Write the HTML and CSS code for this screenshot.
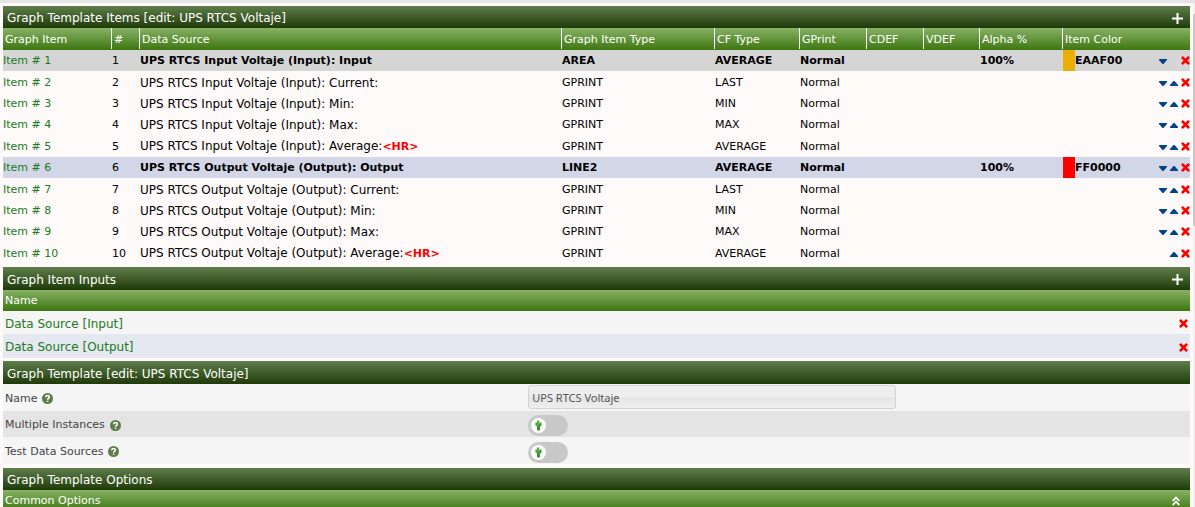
FILE: index.html
```html
<!DOCTYPE html>
<html lang="en">
<head>
<meta charset="utf-8">
<title>Graph Template</title>
<link rel="stylesheet" href="styles.css">
</head>
<body>
<svg class="defs" aria-hidden="true">
  <symbol id="plus" viewBox="0 0 11 11"><path d="M4.500 0h2v4.500H11v2H6.500V11h-2V6.500H0v-2h4.500z"/></symbol>
  <symbol id="cross" viewBox="0 0 9 9"><path d="M1.8 0 4.5 2.6 7.2 0 9 1.8 6.4 4.5 9 7.2 7.2 9 4.5 6.4 1.8 9 0 7.2 2.6 4.5 0 1.8z"/></symbol>
  <symbol id="down" viewBox="0 0 8 5"><path d="M0 0h8v1L4.5 5h-1L0 1z"/></symbol>
  <symbol id="up" viewBox="0 0 8 5"><path d="M0 5h8V4L4.5 0h-1L0 4z"/></symbol>
  <symbol id="help" viewBox="0 0 11 11"><circle cx="5.5" cy="5.5" r="5.5" fill="#5c7c48"/><path d="M3.7 4.2C3.8 2 7.4 2 7.3 4.2 7.3 5.3 5.6 5.3 5.6 6.7M5.6 7.7v1.4" fill="none" stroke="#fff" stroke-width="1.6"/></symbol>
  <symbol id="collapse" viewBox="0 0 8 10"><path d="M.7 4.8 4 1.5l3.3 3.3M.7 9 4 5.7 7.3 9" fill="none" stroke="#fff" stroke-width="1.8"/></symbol>
  <symbol id="cactus" viewBox="0 0 7 11"><path d="M2 1q1-1.500 2.300 0v2.500h.7V2.500h1.500v3L5 6.500V10q-1.500 1.500-3 0V6L.5 5.500v-3H2z" fill="#2f9a2b"/><path d="M2.500 1h1v5h-1zM.5 3h1v1.500h-1z" fill="#8cc152"/></symbol>
</svg>
<main class="page">
  <div class="content">
    <section class="panel">
      <header class="title"><h2>Graph Template Items [edit: UPS RTCS Voltaje]</h2><a href="#" aria-label="Add item"><svg class="plus"><use href="#plus"/></svg></a></header>
      <table class="items">
        <colgroup><col class="c-item"><col class="c-num"><col><col class="c-type"><col class="c-cf"><col class="c-gprint"><col class="c-cdef"><col class="c-vdef"><col class="c-alpha"><col class="c-color"></colgroup>
        <thead><tr><th><span>Graph Item</span></th><th><span>#</span></th><th><span>Data Source</span></th><th><span>Graph Item Type</span></th><th><span>CF Type</span></th><th><span>GPrint</span></th><th><span>CDEF</span></th><th><span>VDEF</span></th><th><span>Alpha %</span></th><th><span>Item Color</span></th></tr></thead>
        <tbody>
          <tr class="main gray"><td><a href="#">Item # 1</a></td><td>1</td><td>UPS RTCS Input Voltaje (Input): Input</td><td>AREA</td><td>AVERAGE</td><td>Normal</td><td></td><td></td><td>100%</td><td><div class="color-cell"><i class="swatch amber"></i><span>EAAF00</span><span class="actions"><a href="#" aria-label="Move down"><svg class="arrow"><use href="#down"/></svg></a><i class="blank"></i><a href="#" aria-label="Delete"><svg class="cross"><use href="#cross"/></svg></a></span></div></td></tr>
          <tr><td><a href="#">Item # 2</a></td><td>2</td><td>UPS RTCS Input Voltaje (Input): Current:</td><td>GPRINT</td><td>LAST</td><td>Normal</td><td></td><td></td><td></td><td><div class="color-cell"><span class="actions"><a href="#" aria-label="Move down"><svg class="arrow"><use href="#down"/></svg></a><a href="#" aria-label="Move up"><svg class="arrow"><use href="#up"/></svg></a><a href="#" aria-label="Delete"><svg class="cross"><use href="#cross"/></svg></a></span></div></td></tr>
          <tr><td><a href="#">Item # 3</a></td><td>3</td><td>UPS RTCS Input Voltaje (Input): Min:</td><td>GPRINT</td><td>MIN</td><td>Normal</td><td></td><td></td><td></td><td><div class="color-cell"><span class="actions"><a href="#" aria-label="Move down"><svg class="arrow"><use href="#down"/></svg></a><a href="#" aria-label="Move up"><svg class="arrow"><use href="#up"/></svg></a><a href="#" aria-label="Delete"><svg class="cross"><use href="#cross"/></svg></a></span></div></td></tr>
          <tr><td><a href="#">Item # 4</a></td><td>4</td><td>UPS RTCS Input Voltaje (Input): Max:</td><td>GPRINT</td><td>MAX</td><td>Normal</td><td></td><td></td><td></td><td><div class="color-cell"><span class="actions"><a href="#" aria-label="Move down"><svg class="arrow"><use href="#down"/></svg></a><a href="#" aria-label="Move up"><svg class="arrow"><use href="#up"/></svg></a><a href="#" aria-label="Delete"><svg class="cross"><use href="#cross"/></svg></a></span></div></td></tr>
          <tr><td><a href="#">Item # 5</a></td><td>5</td><td>UPS RTCS Input Voltaje (Input): Average:<b class="hr">&lt;HR&gt;</b></td><td>GPRINT</td><td>AVERAGE</td><td>Normal</td><td></td><td></td><td></td><td><div class="color-cell"><span class="actions"><a href="#" aria-label="Move down"><svg class="arrow"><use href="#down"/></svg></a><a href="#" aria-label="Move up"><svg class="arrow"><use href="#up"/></svg></a><a href="#" aria-label="Delete"><svg class="cross"><use href="#cross"/></svg></a></span></div></td></tr>
          <tr class="main blue"><td><a href="#">Item # 6</a></td><td>6</td><td>UPS RTCS Output Voltaje (Output): Output</td><td>LINE2</td><td>AVERAGE</td><td>Normal</td><td></td><td></td><td>100%</td><td><div class="color-cell"><i class="swatch red"></i><span>FF0000</span><span class="actions"><a href="#" aria-label="Move down"><svg class="arrow"><use href="#down"/></svg></a><a href="#" aria-label="Move up"><svg class="arrow"><use href="#up"/></svg></a><a href="#" aria-label="Delete"><svg class="cross"><use href="#cross"/></svg></a></span></div></td></tr>
          <tr><td><a href="#">Item # 7</a></td><td>7</td><td>UPS RTCS Output Voltaje (Output): Current:</td><td>GPRINT</td><td>LAST</td><td>Normal</td><td></td><td></td><td></td><td><div class="color-cell"><span class="actions"><a href="#" aria-label="Move down"><svg class="arrow"><use href="#down"/></svg></a><a href="#" aria-label="Move up"><svg class="arrow"><use href="#up"/></svg></a><a href="#" aria-label="Delete"><svg class="cross"><use href="#cross"/></svg></a></span></div></td></tr>
          <tr><td><a href="#">Item # 8</a></td><td>8</td><td>UPS RTCS Output Voltaje (Output): Min:</td><td>GPRINT</td><td>MIN</td><td>Normal</td><td></td><td></td><td></td><td><div class="color-cell"><span class="actions"><a href="#" aria-label="Move down"><svg class="arrow"><use href="#down"/></svg></a><a href="#" aria-label="Move up"><svg class="arrow"><use href="#up"/></svg></a><a href="#" aria-label="Delete"><svg class="cross"><use href="#cross"/></svg></a></span></div></td></tr>
          <tr><td><a href="#">Item # 9</a></td><td>9</td><td>UPS RTCS Output Voltaje (Output): Max:</td><td>GPRINT</td><td>MAX</td><td>Normal</td><td></td><td></td><td></td><td><div class="color-cell"><span class="actions"><a href="#" aria-label="Move down"><svg class="arrow"><use href="#down"/></svg></a><a href="#" aria-label="Move up"><svg class="arrow"><use href="#up"/></svg></a><a href="#" aria-label="Delete"><svg class="cross"><use href="#cross"/></svg></a></span></div></td></tr>
          <tr><td><a href="#">Item # 10</a></td><td>10</td><td>UPS RTCS Output Voltaje (Output): Average:<b class="hr">&lt;HR&gt;</b></td><td>GPRINT</td><td>AVERAGE</td><td>Normal</td><td></td><td></td><td></td><td><div class="color-cell"><span class="actions"><a href="#" aria-label="Move up"><svg class="arrow"><use href="#up"/></svg></a><a href="#" aria-label="Delete"><svg class="cross"><use href="#cross"/></svg></a></span></div></td></tr>
        </tbody>
      </table>
    </section>

    <section class="panel">
      <header class="title tall"><h2>Graph Item Inputs</h2><a href="#" aria-label="Add input"><svg class="plus"><use href="#plus"/></svg></a></header>
      <table class="inputs">
        <thead><tr><th><span>Name</span></th></tr></thead>
        <tbody>
          <tr><td><div class="input-row"><a href="#">Data Source [Input]</a><a href="#" aria-label="Delete"><svg class="cross"><use href="#cross"/></svg></a></div></td></tr>
          <tr class="alt"><td><div class="input-row"><a href="#">Data Source [Output]</a><a href="#" aria-label="Delete"><svg class="cross"><use href="#cross"/></svg></a></div></td></tr>
        </tbody>
      </table>
    </section>

    <form class="panel">
      <header class="title tall"><h2>Graph Template [edit: UPS RTCS Voltaje]</h2></header>
      <div class="field"><div class="label"><label for="name">Name</label><svg class="help"><use href="#help"/></svg></div><input class="text" id="name" type="text" value="UPS RTCS Voltaje"></div>
      <div class="field dark"><div class="label"><label for="multiple">Multiple Instances</label><svg class="help"><use href="#help"/></svg></div><span class="switch"><input id="multiple" type="checkbox"><svg class="knob"><use href="#cactus"/></svg></span></div>
      <div class="field"><div class="label"><label for="test">Test Data Sources</label><svg class="help"><use href="#help"/></svg></div><span class="switch"><input id="test" type="checkbox"><svg class="knob"><use href="#cactus"/></svg></span></div>
    </form>

    <section class="panel options">
      <header class="title"><h2>Graph Template Options</h2></header>
      <div class="subtitle"><h3>Common Options</h3><a href="#" aria-label="Collapse"><svg class="collapse"><use href="#collapse"/></svg></a></div>
    </section>
  </div>
  <div class="scroll"><div class="thumb"></div></div>
</main>
</body>
</html>
```
FILE: styles.css
```css
* { box-sizing: border-box; }
body {
  margin: 0;
  height: 100vh;
  overflow: hidden;
  background: #fffafa;
  color: #000;
  font: 11px/14px Verdana, "DejaVu Sans", sans-serif;
}
a { color: #227a22; text-decoration: none; }
svg { display: block; }
h2, h3 { margin: 0; font-size: 12px; font-weight: normal; }
h3 { font-size: 11px; }
.defs { display: none; }
.page { display: flex; height: 100%; border-top: 3px solid #e5e5e5; }
.content { flex: 1; min-width: 0; padding: 3px 3px 0; overflow: hidden; }
.panel { margin-bottom: 3px; }

.title {
  display: flex;
  align-items: center;
  justify-content: space-between;
  height: 22px;
  padding: 2px 7px 0 4px;
  background: linear-gradient(#5f7e4b, #1f3a08);
  color: #fff;
}
.title.tall { height: 23px; }
.plus { width: 11px; height: 11px; fill: #fff; }

table { width: 100%; border-collapse: collapse; table-layout: fixed; }
thead tr { height: 22px; background: linear-gradient(#88b266, #3d7610); }
th { padding: 0; font-weight: normal; text-align: left; color: #fff; vertical-align: top; }
th span { display: block; height: 21px; padding: 5px 2px 0; border-right: 1px solid #fff; }
th:last-child span { border: 0; }
.c-item { width: 109px; }
.c-num { width: 28px; }
.c-type { width: 153px; }
.c-cf { width: 85px; }
.c-gprint { width: 67px; }
.c-cdef { width: 57px; }
.c-vdef { width: 56px; }
.c-alpha { width: 83px; }
.c-color { width: 127px; }
td { padding: 0; white-space: nowrap; }
.items tbody tr { height: 21px; }
.items tbody tr:nth-child(5n), .items tbody tr:nth-child(5n+2) { height: 22px; }
.items tbody tr:nth-child(5n) td, .items tbody tr:nth-child(5n+2) td { padding-top: 1px; }
.items tr:not(.main) td:nth-child(3) { font-size: 12px; }
.main { font-weight: bold; }
.main td:nth-child(-n+2) { font-weight: normal; }
.gray { background: #d5d5d5; }
.blue { background: #d2d6e7; }
.hr { color: #f00; font-size: 11px; }
.color-cell { display: flex; align-items: center; height: 21px; }
.swatch { width: 12px; height: 21px; }
.amber { background: #eaaf00; }
.red { background: #f00; }
.actions { display: flex; align-items: center; gap: 3px; margin-left: auto; }
.arrow { width: 8px; height: 5px; margin-top: 1px; fill: #00438c; }
.blank { width: 8px; }
.cross { width: 9px; height: 9px; fill: #f00; }

.inputs thead tr { height: 21px; }
.inputs th span { height: 20px; padding-top: 4px; }
.inputs td { height: 23px; padding: 2px 2px 0; background: #f5f5f5; font-size: 12px; }
.inputs .alt td { height: 24px; background: #e5e8f1; }
.input-row { display: flex; align-items: center; justify-content: space-between; }

.field {
  display: grid;
  grid-template-columns: 44.25% 31%;
  align-items: center;
  height: 27px;
  background: #f5f5f5;
  color: #444;
}
.field.dark { height: 26px; background: #e4e4e4; }
.label { display: flex; align-items: center; gap: 5px; padding: 2px 0 0 2px; }
.help { width: 11px; height: 11px; }
.text {
  height: 24px;
  padding: 0 3px;
  margin-bottom: 1px;
  border: 1px solid #d3d3d3;
  border-radius: 3px;
  background: linear-gradient(#eee 50%, #e4e4e4 50%, #eee);
  color: #555;
  font: 11px "Noto Sans", sans-serif;
}
.switch { display: grid; align-items: center; width: 40px; height: 21px; margin-top: 3px; }
.switch input {
  grid-area: 1 / 1;
  width: 40px;
  height: 21px;
  margin: 0;
  appearance: none;
  border-radius: 11px;
  background: #c8c8c8;
}
.knob {
  grid-area: 1 / 1;
  width: 15px;
  height: 15px;
  margin-left: 3px;
  padding: 2px;
  border-radius: 50%;
  background: #fff;
  pointer-events: none;
}

.options { margin-top: 4px; }
.subtitle {
  display: flex;
  align-items: center;
  justify-content: space-between;
  height: 21px;
  padding: 0 10px 0 2px;
  background: linear-gradient(#88b266, #3d7610);
  color: #fff;
}
.collapse { width: 8px; height: 10px; }

.scroll { width: 2px; padding-top: 11px; background: #f1f1f1; }
.thumb { height: 43%; background: #c8c8c8; }
```
